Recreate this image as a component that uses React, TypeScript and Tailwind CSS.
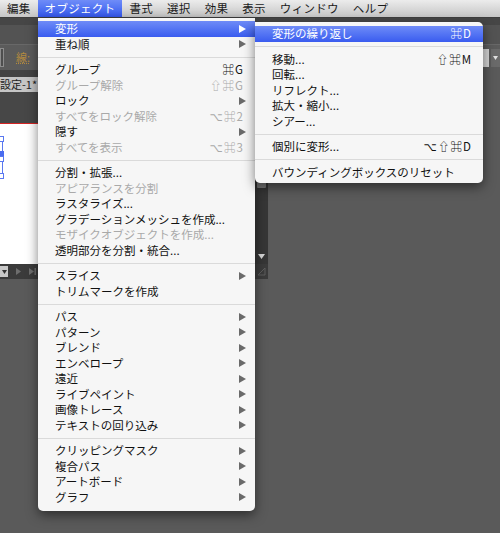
import React from "react"

type Entry =
  | { label: string; shortcut?: string; sub?: boolean; disabled?: boolean; active?: boolean }
  | "sep"

const menuBar = ["編集", "オブジェクト", "書式", "選択", "効果", "表示", "ウィンドウ", "ヘルプ"]

const objectMenu: Entry[] = [
  { label: "変形", sub: true, active: true },
  { label: "重ね順", sub: true },
  "sep",
  { label: "グループ", shortcut: "⌘G" },
  { label: "グループ解除", shortcut: "⇧⌘G", disabled: true },
  { label: "ロック", sub: true },
  { label: "すべてをロック解除", shortcut: "⌥⌘2", disabled: true },
  { label: "隠す", sub: true },
  { label: "すべてを表示", shortcut: "⌥⌘3", disabled: true },
  "sep",
  { label: "分割・拡張..." },
  { label: "アピアランスを分割", disabled: true },
  { label: "ラスタライズ..." },
  { label: "グラデーションメッシュを作成..." },
  { label: "モザイクオブジェクトを作成...", disabled: true },
  { label: "透明部分を分割・統合..." },
  "sep",
  { label: "スライス", sub: true },
  { label: "トリムマークを作成" },
  "sep",
  { label: "パス", sub: true },
  { label: "パターン", sub: true },
  { label: "ブレンド", sub: true },
  { label: "エンベロープ", sub: true },
  { label: "遠近", sub: true },
  { label: "ライブペイント", sub: true },
  { label: "画像トレース", sub: true },
  { label: "テキストの回り込み", sub: true },
  "sep",
  { label: "クリッピングマスク", sub: true },
  { label: "複合パス", sub: true },
  { label: "アートボード", sub: true },
  { label: "グラフ", sub: true },
]

const transformMenu: Entry[] = [
  { label: "変形の繰り返し", shortcut: "⌘D", active: true },
  "sep",
  { label: "移動...", shortcut: "⇧⌘M" },
  { label: "回転..." },
  { label: "リフレクト..." },
  { label: "拡大・縮小..." },
  { label: "シアー..." },
  "sep",
  { label: "個別に変形...", shortcut: "⌥⇧⌘D" },
  "sep",
  { label: "バウンディングボックスのリセット" },
]

const font = "font-['Noto_Sans_CJK_JP','DejaVu_Sans',sans-serif]"

function Arrow({ color }: { color: string }) {
  return (
    <svg width="7" height="8" viewBox="0 0 7 8" className="shrink-0">
      <path d="M0 0L7 4L0 8Z" fill={color} />
    </svg>
  )
}

function MenuList({ items }: { items: Entry[] }) {
  return (
    <>
      {items.map((item, i) => {
        if (item === "sep") {
          return (
            <div key={i} className="h-[10px] flex items-center">
              <div className="h-px w-full bg-[#dadada]" />
            </div>
          )
        }
        const color = item.active
          ? "bg-linear-to-b from-[#6f8bf7] to-[#3a5bef] text-white"
          : item.disabled
          ? "text-[#a9a9a9]"
          : "text-[#111]"
        return (
          <div key={i} className={`flex items-center h-[15.5px] pl-[17px] pr-[9px] ${color}`}>
            <span className="flex-1 whitespace-nowrap">{item.label}</span>
            {item.shortcut && <span className="mr-[2px] tracking-[1px]">{item.shortcut}</span>}
            {item.sub && <Arrow color={item.active ? "#ffffff" : "#6a6a6a"} />}
          </div>
        )
      })}
    </>
  )
}

export default function App() {
  return (
    <div className={`relative w-[500px] h-[533px] overflow-hidden bg-[#5a5a5a] ${font} text-[11.5px] leading-none`}>
      {/* Menu bar */}
      <div className="flex h-[18px] bg-linear-to-b from-[#ececec] to-[#c6c6c6] border-b border-[#3e3e3e]">
        {menuBar.map((m, i) => (
          <div
            key={m}
            className={`flex items-center px-[7px] whitespace-nowrap tracking-[0.3px] ${
              i === 1 ? "bg-linear-to-b from-[#6f8cf8] to-[#3557ee] text-white" : "text-[#1a1a1a]"
            }`}
          >
            {m}
          </div>
        ))}
      </div>

      {/* App chrome */}
      <div className="h-[7px] bg-[#464646]" />
      <div className="h-[19px] bg-[#535353]" />
      <div className="h-[26px] bg-[#5b5b5b] border-t border-[#686868] flex items-center">
        <div className="w-[4px] h-[19px] border border-[#8c8c8c] bg-[#4e4e4e]" />
        <span className="ml-[12px] text-[11px] text-[#b48a3e] underline decoration-dotted">線:</span>
        <div className="flex-1" />
        <div className="w-[7px] h-[18px] bg-[#d3d3d3]" />
        <div className="ml-[2px] w-[9px] h-[18px] bg-[#6a6a6a] flex items-center justify-center">
          <svg width="5" height="4" viewBox="0 0 5 4">
            <path d="M0 0H5L2.5 4Z" fill="#e0e0e0" />
          </svg>
        </div>
      </div>

      <div className="flex">
        {/* Document window */}
        <div className="w-[268px] flex flex-col">
          <div className="h-[7px] bg-[#434343]" />
          <div className="h-[15px] bg-[#3f3f3f] flex">
            <div className="w-[40px] bg-[#c5c5c5] text-[#222] text-[11px] flex items-center whitespace-nowrap overflow-hidden">
              設定-1*
            </div>
          </div>
          <div className="h-[31px] bg-[#474747]" />
          <div className="h-px bg-[#d42424]" />
          <div className="h-[140px] flex">
            <div className="relative flex-1 bg-white">
              <div className="absolute left-[2px] top-[14px] w-px h-[38px] bg-[#5a78f0]" />
              <div className="absolute left-[-2px] top-[12px] w-[6px] h-[6px] border border-[#5a78f0] bg-white" />
              <div className="absolute left-[-1px] top-[27px] w-[5px] h-[5px] bg-[#4a6cf0]" />
              <div className="absolute left-[-2px] top-[32px] w-[6px] h-[6px] border border-[#5a78f0] bg-white" />
              <div className="absolute left-[-2px] top-[49px] w-[6px] h-[6px] border border-[#5a78f0] bg-white" />
            </div>
            <div className="w-[13px] bg-[#363636] flex flex-col items-center pt-[58px]">
              <div className="w-[9px] h-[6px] bg-[#7c7c7c] rounded-[1px]" />
              <div className="flex-1" />
              <svg width="7" height="5" viewBox="0 0 7 5" className="mb-[5px]">
                <path d="M0 0H7L3.5 5Z" fill="#d8d8d8" />
              </svg>
            </div>
          </div>
          <div className="h-[15px] bg-[#3b3b3b] flex items-center">
            <div className="w-[8px] h-[11px] bg-[#c9c9c9] flex items-center justify-center">
              <svg width="5" height="4" viewBox="0 0 5 4">
                <path d="M0 0H5L2.5 4Z" fill="#333" />
              </svg>
            </div>
            <svg width="5" height="7" viewBox="0 0 5 7" className="ml-[8px]">
              <path d="M0 0L5 3.5L0 7Z" fill="#6e6e6e" />
            </svg>
            <svg width="7" height="7" viewBox="0 0 7 7" className="ml-[8px]">
              <path d="M0 0L5 3.5L0 7Z M5.5 0H7V7H5.5Z" fill="#6e6e6e" />
            </svg>
            <div className="flex-1" />
            <svg width="9" height="9" viewBox="0 0 9 9" className="mr-[2px]">
              <path d="M8 1V8H1Z" fill="none" stroke="#5e5e5e" strokeWidth="1" />
            </svg>
          </div>
        </div>
        <div className="flex-1 bg-[#5a5a5a]" />
      </div>

      {/* Object menu */}
      <div className="absolute left-[38px] top-[18px] w-[217px] pt-[3px] pb-[6px] bg-[#f6f6f6] rounded-b-[5px] shadow-[0_4px_12px_rgba(0,0,0,0.5)]">
        <MenuList items={objectMenu} />
      </div>

      {/* Transform submenu */}
      <div className="absolute left-[255px] top-[22px] w-[228px] pt-[4px] pb-[3px] bg-[#f6f6f6] rounded-[5px] rounded-tl-none shadow-[0_4px_12px_rgba(0,0,0,0.5)]">
        <MenuList items={transformMenu} />
      </div>
    </div>
  )
}
